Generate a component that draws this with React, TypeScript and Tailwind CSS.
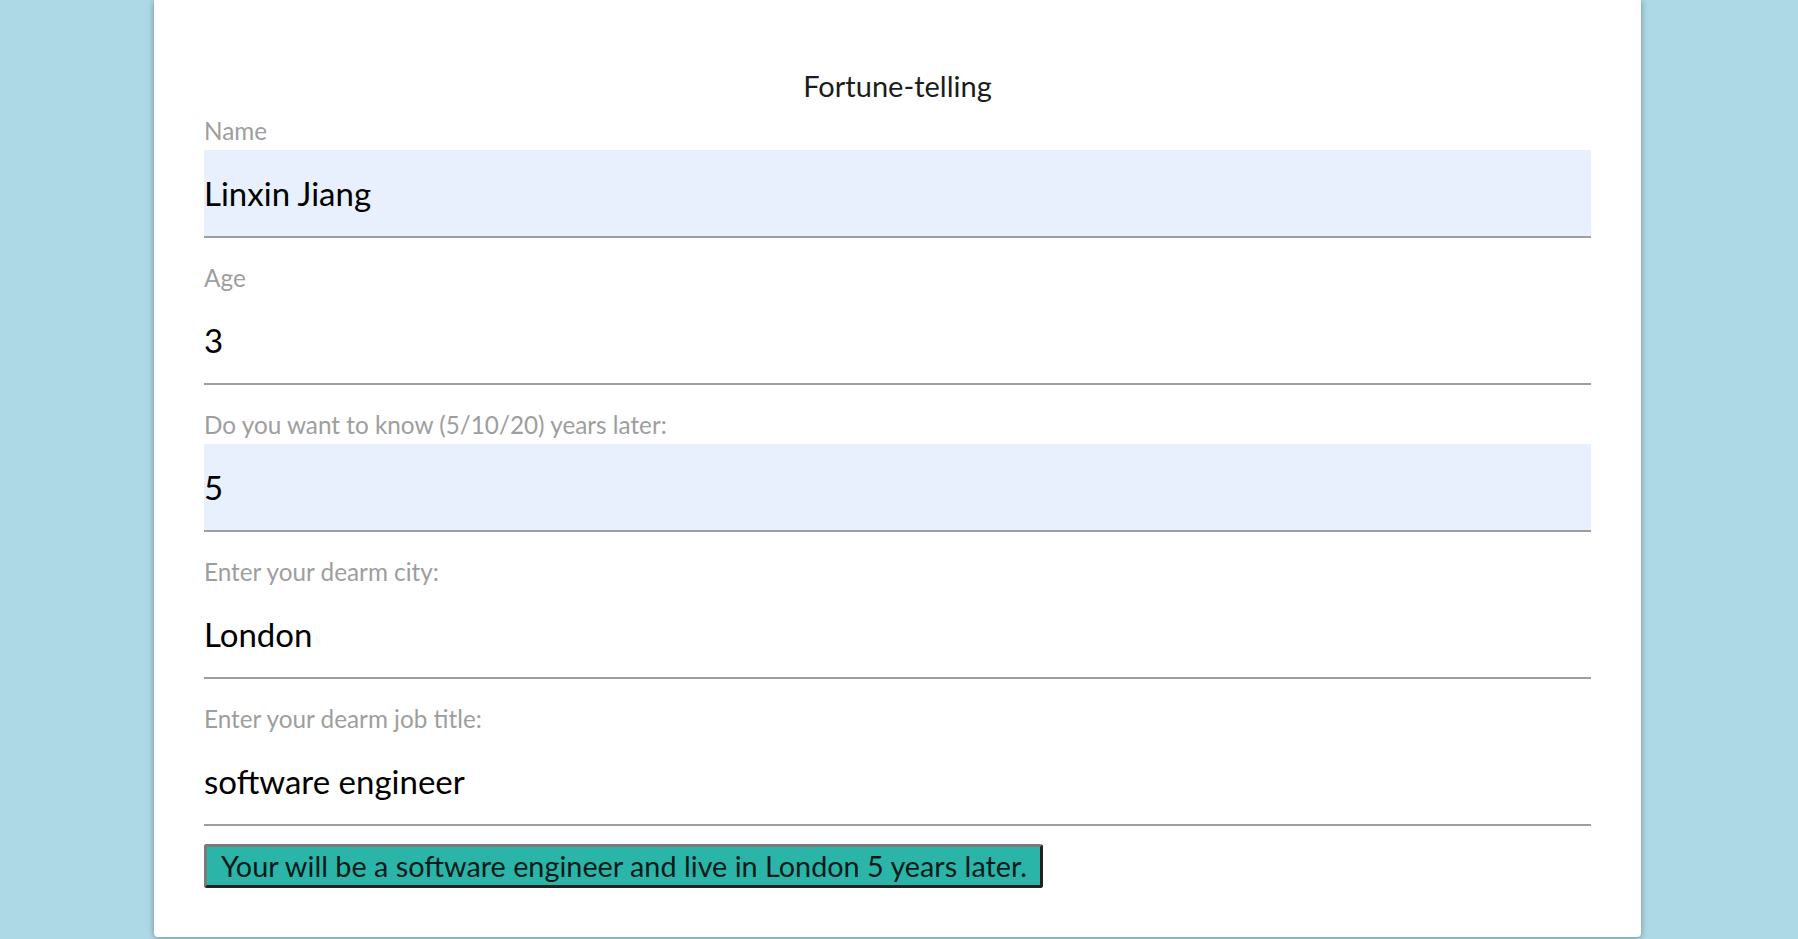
import React from 'react';

const fields = [
  { label: 'Name', value: 'Linxin Jiang', filled: true },
  { label: 'Age', value: '3', filled: false },
  { label: 'Do you want to know (5/10/20) years later:', value: '5', filled: true },
  { label: 'Enter your dearm city:', value: 'London', filled: false },
  { label: 'Enter your dearm job title:', value: 'software engineer', filled: false },
];

export default function App() {
  return (
    <div className="min-h-screen bg-[#add8e6] font-['Lato',sans-serif]">
      <div className="ml-[154px] w-[1487px] bg-white rounded-b-[4px] shadow-[0_1px_6px_rgba(0,0,0,0.35)] px-[50px] pt-[68px] pb-[49px]">
        <h1 className="text-center text-[29px] leading-[35px] text-[#1c1c1c]">Fortune-telling</h1>

        <div className="flex flex-col">
          {fields.map((f) => (
            <div key={f.label} className="pt-[24px] first:pt-[12px]">
              <label className="block text-[24.3px] leading-[32px] mb-[3px] text-[#9e9e9e]">{f.label}</label>
              <input
                type="text"
                defaultValue={f.value}
                className={`block w-full h-[88px] border-b-2 border-[#9e9e9e] text-[33px] text-black outline-none ${
                  f.filled ? 'bg-[#e8f0fe]' : 'bg-white'
                }`}
              />
            </div>
          ))}
        </div>

        <button className="mt-[18px] h-[44px] pl-[14px] pr-[13px] bg-[#2ab5a8] text-[28.8px] leading-[36px] text-[#0d1a1a] border-[3px] border-t-[#7a7a7a] border-l-[#7a7a7a] border-r-[#222] border-b-[#222] rounded-[3px]">
          Your will be a software engineer and live in London 5 years later.
        </button>
      </div>
    </div>
  );
}
